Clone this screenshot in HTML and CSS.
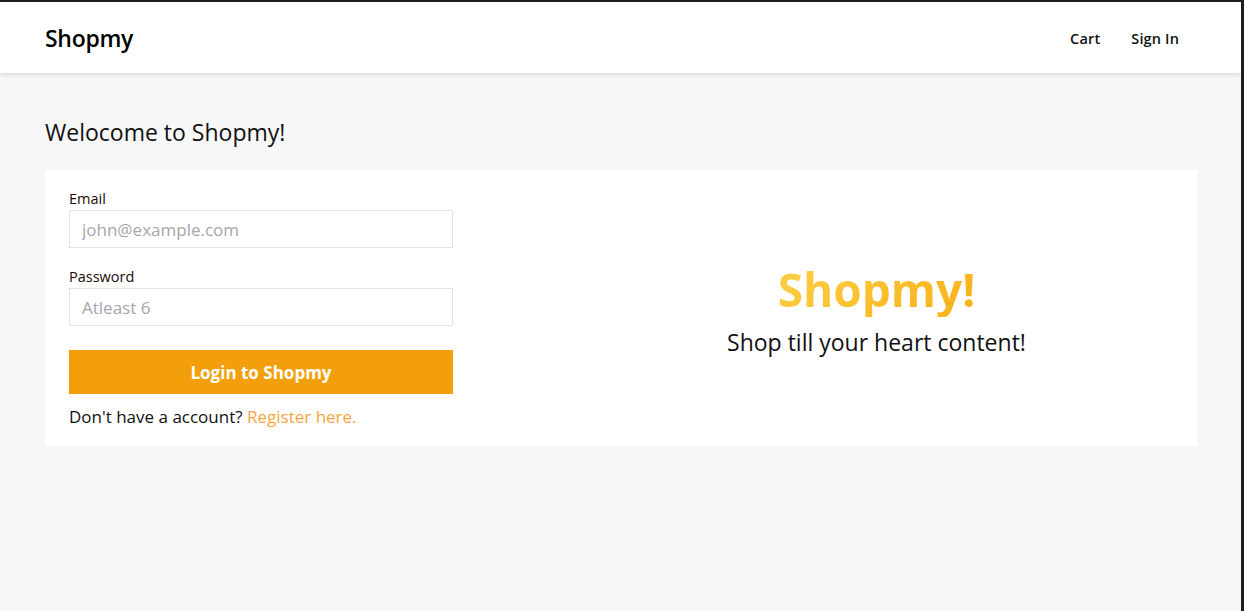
FILE: index.html
```html
<!DOCTYPE html>
<html lang="en">
<head>
<meta charset="utf-8">
<title>Shopmy</title>
<link rel="stylesheet" href="styles.css">
</head>
<body>
<div class="frame">
  <header class="navbar">
    <a class="brand" href="#">Shopmy</a>
    <nav class="nav-links">
      <a href="#">Cart</a>
      <a href="#">Sign In</a>
    </nav>
  </header>
  <main class="main">
    <h1 class="welcome">Welocome to Shopmy!</h1>
    <section class="card">
      <form class="login-form">
        <label class="field-label" for="email">Email</label>
        <input class="field-input" id="email" type="email" placeholder="john@example.com">
        <label class="field-label" for="password">Password</label>
        <input class="field-input" id="password" type="password" placeholder="Atleast 6">
        <button class="login-btn" type="button">Login to Shopmy</button>
        <p class="register">Don't have a account? <a href="#">Register here.</a></p>
      </form>
      <div class="promo">
        <div class="promo-title">Shopmy!</div>
        <div class="promo-sub">Shop till your heart content!</div>
      </div>
    </section>
  </main>
</div>
</body>
</html>
```
FILE: styles.css
```css
* { box-sizing: border-box; }
html, body { margin: 0; height: 100%; }
body {
  background: #1e1e1e;
  font-family: "Open Sans", "Noto Sans", sans-serif;
  color: #111;
}
.frame {
  margin-top: 2px;
  margin-right: 3px;
  height: calc(100% - 2px);
  background: #f7f7f7;
  overflow: hidden;
}
.navbar {
  height: 71px;
  background: #fff;
  display: flex;
  align-items: center;
  justify-content: space-between;
  padding: 0 62px 0 45px;
  box-shadow: 0 2px 5px rgba(0,0,0,0.12);
  position: relative;
}
.brand {
  font-size: 23px;
  font-weight: 600;
  color: #000;
  text-decoration: none;
  letter-spacing: -0.3px;
}
.nav-links { display: flex; gap: 31px; padding-top: 2px; }
.nav-links a {
  font-size: 14.5px;
  font-weight: 600;
  color: #111;
  text-decoration: none;
  letter-spacing: 0.15px;
}
.main { padding: 0 44px 0 45px; }
.welcome {
  margin: 0;
  padding-top: 44px;
  font-size: 23px;
  font-weight: 400;
  line-height: 30px;
}
.card {
  margin-top: 23px;
  background: #fff;
  display: flex;
  padding: 19px 24px 17px 24px;
  gap: 127px;
}
.login-form {
  width: 384px;
  display: flex;
  flex-direction: column;
}
.field-label {
  font-size: 14.5px;
  line-height: 20px;
  color: #1a0a0a;
}
.field-input {
  height: 38px;
  border: 1px solid #e3e3e3;
  margin: 1px 0 19px;
  padding: 0 12px;
  font-family: inherit;
  font-size: 17px;
  color: #333;
  outline: none;
}
.field-input::placeholder { color: #a5a5ad; }
.login-btn {
  margin-top: 5px;
  height: 44px;
  background: #f39f0c;
  border: none;
  color: #fff;
  font-family: inherit;
  font-size: 17px;
  font-weight: 700;
}
.register {
  margin: 11px 0 0;
  font-size: 17px;
  line-height: 24px;
}
.register a { color: #f7a43f; text-decoration: none; }
.promo {
  flex: 1;
  display: flex;
  flex-direction: column;
  align-items: center;
  justify-content: center;
}
.promo-title {
  font-size: 46px;
  font-weight: 700;
  line-height: 56px;
  background: linear-gradient(135deg, #fdd046, #f8b018);
  -webkit-background-clip: text;
  background-clip: text;
  color: transparent;
}
.promo-sub {
  font-size: 23px;
  line-height: 30px;
  margin-top: 10px;
}
```
